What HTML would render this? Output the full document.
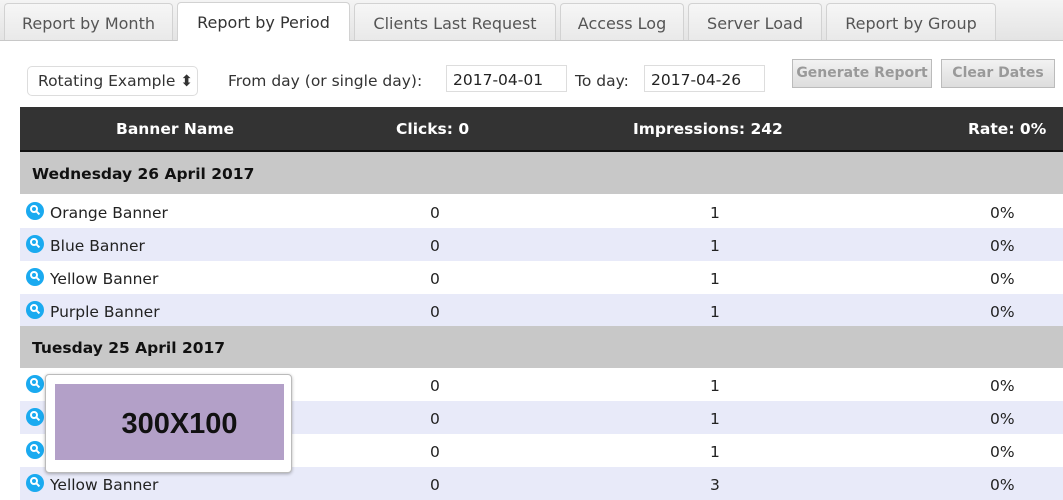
<!DOCTYPE html>
<html><head><style>
body{margin:0;width:1063px;height:500px;overflow:hidden;background:#fff;font-family:"DejaVu Sans","Liberation Sans",sans-serif;position:relative;color:#222}
.tabbar{position:absolute;left:0;top:0;width:1063px;height:40px;background:linear-gradient(#f4f4f4,#e4e4e4);border-bottom:1px solid #c8c8c8}
.tab{position:absolute;top:3px;height:36px;background:linear-gradient(#f6f6f6,#e9e9e9);border:1px solid #d2d2d2;border-bottom:none;border-radius:4px 4px 0 0;font-size:16px;color:#555;text-align:center;line-height:40px}
.tab.act{background:#fff;color:#333;height:38px;top:2px}
.ctl{position:absolute;font-size:15.5px;color:#333}
.inp{position:absolute;border:1px solid #ddd;height:27px;line-height:27px;font-size:15.5px;padding-left:6px;box-sizing:border-box}
.btn{position:absolute;border:1px solid #bbb;background:linear-gradient(#f2f2f2,#ddd);color:#999;font-weight:bold;font-size:14px;text-align:center;height:29px;line-height:27px;box-sizing:border-box}
.row{position:absolute;left:20px;width:1043px;height:33px;font-size:15.5px}
.row span{position:absolute;top:9px}
.hd{background:#333;color:#fff;font-weight:bold;height:43px;border-bottom:2px solid #111}
.hd span{top:13px}
.dt{background:#c8c8c8;height:42px;font-weight:bold;color:#111}
.dt span{top:13px;left:12px}
.alt{background:#e8eaf9}
.ic{position:absolute;left:6px;top:7px;width:18px;height:18px;border-radius:50%;background:#1aaaf0}
.ic:before{content:"";position:absolute;left:4px;top:3px;width:8px;height:8px;border:2px solid #fff;border-radius:50%;box-sizing:border-box}
.ic:after{content:"";position:absolute;left:10px;top:10px;width:4px;height:2px;background:#fff;transform:rotate(45deg)}
.c1{left:410px}.c2{left:690px}.c3{left:970px}
</style></head><body>
<div class="tabbar"></div>
<div class="tab" style="left:4px;width:167px">Report by Month</div>
<div class="tab act" style="left:177px;width:171px">Report by Period</div>
<div class="tab" style="left:354px;width:200px">Clients Last Request</div>
<div class="tab" style="left:560px;width:122px">Access Log</div>
<div class="tab" style="left:688px;width:132px">Server Load</div>
<div class="tab" style="left:826px;width:168px">Report by Group</div>

<div class="inp" style="left:27px;top:66px;width:171px;height:30px;line-height:28px;border-radius:5px;color:#333;padding-left:10px">Rotating Example ⬍</div>
<div class="ctl" style="left:228px;top:72px">From day (or single day):</div>
<div class="inp" style="left:446px;top:65px;width:121px;line-height:29px">2017-04-01</div>
<div class="ctl" style="left:575px;top:72px">To day:</div>
<div class="inp" style="left:644px;top:65px;width:121px;line-height:29px">2017-04-26</div>
<div class="btn" style="left:792px;top:59px;width:140px">Generate Report</div>
<div class="btn" style="left:941px;top:59px;width:114px">Clear Dates</div>

<div class="row hd" style="top:107px"><span style="left:96px">Banner Name</span><span style="left:376px">Clicks: 0</span><span style="left:613px">Impressions: 242</span><span style="left:948px">Rate: 0%</span></div>
<div class="row dt" style="top:152px"><span>Wednesday 26 April 2017</span></div>
<div class="row" style="top:195px"><i class="ic"></i><span style="left:30px">Orange Banner</span><span class="c1">0</span><span class="c2">1</span><span class="c3">0%</span></div>
<div class="row alt" style="top:228px"><i class="ic"></i><span style="left:30px">Blue Banner</span><span class="c1">0</span><span class="c2">1</span><span class="c3">0%</span></div>
<div class="row" style="top:261px"><i class="ic"></i><span style="left:30px">Yellow Banner</span><span class="c1">0</span><span class="c2">1</span><span class="c3">0%</span></div>
<div class="row alt" style="top:294px"><i class="ic"></i><span style="left:30px">Purple Banner</span><span class="c1">0</span><span class="c2">1</span><span class="c3">0%</span></div>
<div class="row dt" style="top:326px"><span>Tuesday 25 April 2017</span></div>
<div class="row" style="top:368px"><i class="ic"></i><span class="c1">0</span><span class="c2">1</span><span class="c3">0%</span></div>
<div class="row alt" style="top:401px"><i class="ic"></i><span class="c1">0</span><span class="c2">1</span><span class="c3">0%</span></div>
<div class="row" style="top:434px"><i class="ic"></i><span class="c1">0</span><span class="c2">1</span><span class="c3">0%</span></div>
<div class="row alt" style="top:467px"><i class="ic"></i><span style="left:30px">Yellow Banner</span><span class="c1">0</span><span class="c2">3</span><span class="c3">0%</span></div>

<div style="position:absolute;left:45px;top:374px;width:247px;height:99px;background:#fff;border:1px solid #bbb;border-radius:4px;box-shadow:0 1px 3px rgba(0,0,0,.3);box-sizing:border-box">
<div style="position:absolute;left:9px;top:9px;width:229px;height:76px;background:#b3a0c8;font-family:'Liberation Sans',sans-serif;font-weight:bold;font-size:29px;color:#111;text-align:center;line-height:80px;padding-left:20px;box-sizing:border-box">300X100</div>
</div>
</body></html>
